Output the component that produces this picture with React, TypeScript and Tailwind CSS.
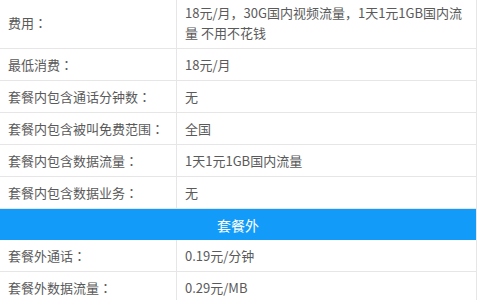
import React from 'react'

type Row = { label: string; value: React.ReactNode }

const inside: Row[] = [
  { label: '最低消费', value: '18元/月' },
  { label: '套餐内包含通话分钟数', value: '无' },
  { label: '套餐内包含被叫免费范围', value: '全国' },
  { label: '套餐内包含数据流量', value: '1天1元1GB国内流量' },
  { label: '套餐内包含数据业务', value: '无' },
]

const outside: Row[] = [
  { label: '套餐外通话', value: '0.19元/分钟' },
  { label: '套餐外数据流量', value: '0.29元/MB' },
]

// centred full-width colon, as in the source page
const Colon = () => <span style={{ fontFamily: '"Noto Sans CJK TC", sans-serif' }}>：</span>

function TableRow({ label, value }: Row) {
  return (
    <div className="flex h-[32px] border-b border-[#e6e6e6]">
      <div className="w-[177px] shrink-0 border-r border-[#e6e6e6] pl-[8px] flex items-center">
        <span>{label}<Colon /></span>
      </div>
      <div className="flex-1 pl-[8px] flex items-center">{value}</div>
    </div>
  )
}

export default function App() {
  return (
    <div
      className="w-[480px] h-[300px] overflow-hidden bg-white text-[13px] text-[#5a5a5a] leading-[20px]"
      style={{ fontFamily: '"Noto Sans CJK SC", "Noto Sans", sans-serif' }}
    >
      <div className="w-[477px] border-r border-[#e6e6e6] -mt-[3px]">
        <div className="flex h-[52px] border-b border-[#e6e6e6]">
          <div className="w-[177px] shrink-0 border-r border-[#e6e6e6] pl-[8px] flex items-center">
            <span>费用<Colon /></span>
          </div>
          <div className="flex-1 pl-[8px] pr-[6px] flex items-center">
            <span>
              18元/月，30G国内视频流量，1天1元1GB国内流
              <br />
              量 不用不花钱
            </span>
          </div>
        </div>
        {inside.map(r => <TableRow key={r.label} {...r} />)}
        <div className="h-[31px] bg-[#129bf8] text-white text-[14px] flex items-center justify-center">套餐外</div>
        {outside.map(r => <TableRow key={r.label} {...r} />)}
      </div>
    </div>
  )
}
